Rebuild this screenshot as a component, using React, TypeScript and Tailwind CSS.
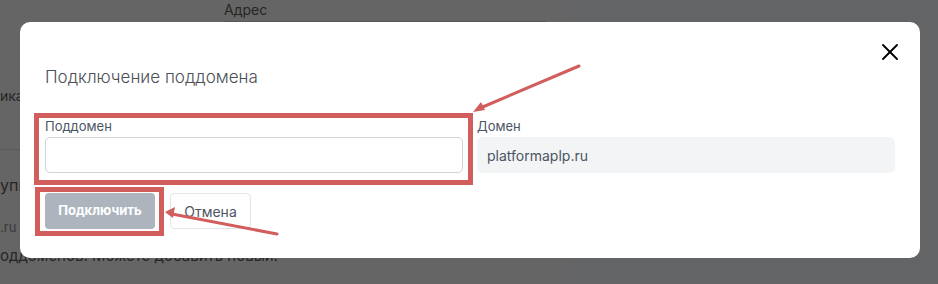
import { X } from 'lucide-react';

const font = { fontFamily: 'Inter, "Noto Sans", sans-serif' };

// Page behind the overlay: only fragments show through
function BackgroundPage() {
  return (
    <div className="flex h-[284px] w-full overflow-hidden">
      <div className="flex w-[567px] flex-col bg-[#656565] text-[#262626]">
        <div className="ml-[224px] mr-[21px] h-[22px] border-b border-[#575757]">
          <span className="block pt-[1px] text-[14px] leading-[17px]">Адрес</span>
        </div>
        <div className="mt-[66px] text-[14px] leading-[16px]">икат</div>
        <div className="mt-[45px] w-[60px] border-t border-[#5a5a5a]" />
        <div className="mt-[25px] text-[16px] leading-[20px]">упны</div>
        <div className="mt-[24px] text-[13px] leading-[16px] text-[#3a3a3a]">.ru</div>
        <div className="mt-[11px] text-[15px] leading-[20px]">оддоменов. Можете добавить новый.</div>
      </div>
      <div className="flex-1 bg-[#636466]" />
    </div>
  );
}

function Annotations() {
  const red = '#d15d5d';
  return (
    <svg className="pointer-events-none absolute left-0 top-0" width="938" height="284">
      <rect x="36.5" y="115.5" width="434" height="67" fill="none" stroke={red} strokeWidth="5" />
      <rect x="37.5" y="189.5" width="124" height="44" fill="none" stroke={red} strokeWidth="5" />
      {/* arrow to the subdomain field */}
      <line x1="579" y1="66" x2="478" y2="109" stroke={red} strokeWidth="3" strokeLinecap="round" />
      <polygon points="473,112 481,102 485,110" fill={red} />
      {/* arrow to the connect button */}
      <line x1="277" y1="234" x2="172" y2="214" stroke={red} strokeWidth="3" strokeLinecap="round" />
      <polygon points="165,212 175,207 173,218" fill={red} />
    </svg>
  );
}

export default function App() {
  return (
    <div className="relative h-[284px] w-[938px] overflow-hidden" style={font}>
      <BackgroundPage />

      {/* Modal */}
      <div className="absolute left-[20px] top-[22px] w-[900px] rounded-[10px] bg-white px-[25px] pb-[29px] pt-[43px]">
        <button className="absolute right-[16px] top-[16px] text-black">
          <X className="h-[28px] w-[28px]" strokeWidth={1.6} />
        </button>

        <h2 className="text-[17px] font-light leading-[24px] text-[#4b4f56]">Подключение поддомена</h2>

        <div className="mt-[29px] grid grid-cols-2 gap-[14px]">
          <div>
            <label className="block text-[13px] leading-[16px] text-[#4b5563]">Поддомен</label>
            <input className="mt-[3px] h-[36px] w-full rounded-[5px] border border-[#cfd4da] px-3 text-[14px] outline-none" />
          </div>
          <div>
            <label className="block text-[13px] leading-[16px] text-[#4b5563]">Домен</label>
            <div className="mt-[3px] flex h-[36px] w-full items-center rounded-[5px] bg-[#f3f4f6] px-[10px] text-[14px] text-[#4b5563]">
              platformaplp.ru
            </div>
          </div>
        </div>

        <div className="mt-[20px] flex gap-[15px]">
          <button className="h-[36px] w-[110px] rounded-[4px] bg-[#adb4be] text-[13px] font-bold text-white">
            Подключить
          </button>
          <button className="h-[36px] w-[81px] rounded-[4px] border border-[#e3e5e8] bg-white text-[14px] text-[#4b5563]">
            Отмена
          </button>
        </div>
      </div>

      <Annotations />
    </div>
  );
}
